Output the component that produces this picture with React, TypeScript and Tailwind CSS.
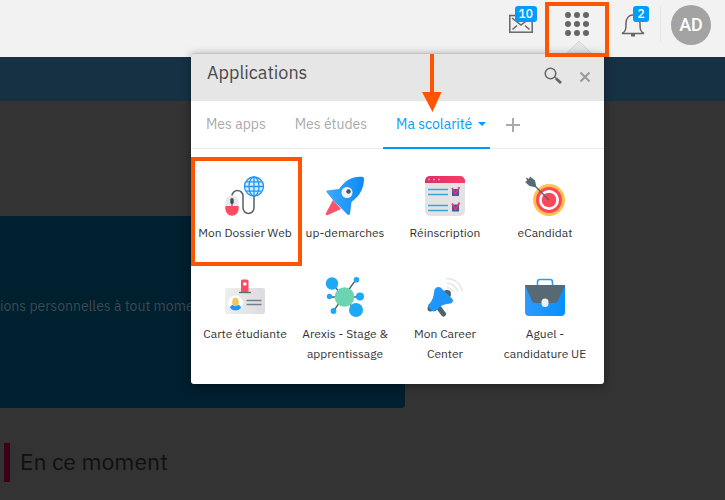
import { useState, type ReactNode } from "react";

type App = {
  name: string;
  icon: ReactNode;
  highlighted?: boolean;
};

const tabs = ["Mes apps", "Mes études", "Ma scolarité"];

function MouseIcon() {
  return (
    <svg viewBox="0 0 40 40" className="size-10" fill="none">
      <path d="M7 23V20a5.500 5.500 0 0 1 11 0v12a5.500 5.500 0 0 0 11 0V20" stroke="#53616b" strokeWidth="1.500" />
      <path d="M0.300 30v-4a6.700 6.700 0 0 1 13.400 0v4z" fill="#e9e9ec" />
      <path d="M0.300 30h13.400v2.800a6.700 7 0 0 1-13.400 0z" fill="#ff4b5e" />
      <rect x="5.300" y="22" width="3.400" height="6" rx="1.700" fill="#3f4e59" />
      <path d="M7 27v3" stroke="#3f4e59" />
      <g stroke="#2196f3" strokeWidth="1.300">
        <circle cx="29" cy="10.500" r="9.500" fill="#d9edff" />
        <ellipse cx="29" cy="10.500" rx="5" ry="9.500" />
        <path d="M29 1v19M19.500 10.500h19M21 5.800h16M21 15.200h16" />
      </g>
    </svg>
  );
}

function RocketIcon() {
  return (
    <svg viewBox="0 0 40 40" className="size-10">
      <defs>
        <linearGradient id="rocket">
          <stop stopColor="#3fa9ff" />
          <stop offset="1" stopColor="#0c8af5" />
        </linearGradient>
      </defs>
      <path d="M8 24 1 37q-1 3 2 2l13-6z" fill="#f9546b" />
      <path d="M8 24 1.500 16q-.500-1 .500-1.500L14 13C20 4 28 0 37 .800q2 0 2 2C39 12 35 20 26.500 26L25 38q-1 1.500-2.500.500l-6-6z" fill="url(#rocket)" />
      <circle cx="22" cy="16.500" r="5.500" fill="#f1f2f6" />
      <circle cx="23.500" cy="15.500" r="2.200" fill="#46535d" />
    </svg>
  );
}

function ChecklistIcon() {
  return (
    <svg viewBox="0 0 40 40" className="size-10" fill="none">
      <defs>
        <linearGradient id="checklist">
          <stop stopColor="#d9306d" />
          <stop offset="1" stopColor="#fa3b62" />
        </linearGradient>
      </defs>
      <rect width="40" height="40" rx="5" fill="#e3e3e4" />
      <path d="M0 7V5a5 5 0 0 1 5-5h30a5 5 0 0 1 5 5v2z" fill="url(#checklist)" />
      <path d="M3 3.500h2m3 0h2m3 0h2" stroke="#f293ad" strokeWidth="1.500" />
      <path d="M3 13.500h20M3 18.500h20M3 29.500h20M3 34.500h20" stroke="#38a6de" strokeWidth="1.500" />
      <path d="M27 13h7v7h-7zM27 28.500h7v7h-7z" fill="#405a9f" />
      <path d="m27 12 3.500 6L34.500 11M27 27.500l3.500 6 4-7" stroke="#ef3169" strokeWidth="1.600" />
    </svg>
  );
}

function TargetIcon() {
  return (
    <svg viewBox="0 0 40 40" className="size-10">
      <circle cx="24" cy="24" r="16" fill="#ffc34d" />
      <circle cx="24" cy="24" r="13" fill="#ff4757" />
      <circle cx="24" cy="24" r="10" fill="#fff" />
      <circle cx="24" cy="24" r="7.300" fill="#ff4757" />
      <path d="m8 8 16 16" stroke="#53636e" strokeWidth="1.300" />
      <path d="M1 1.500 4 3l1-2.500 5 4 1.500 7-7-1.500L0 6l2-1z" fill="#566975" />
    </svg>
  );
}

function CardIcon() {
  return (
    <svg viewBox="0 0 40 40" className="size-10">
      <defs>
        <linearGradient id="card">
          <stop stopColor="#eeeeef" />
          <stop offset="1" stopColor="#dcdcde" />
        </linearGradient>
      </defs>
      <rect y="11" width="40" height="26" rx="2.500" fill="url(#card)" />
      <path d="M14 15.500h12" stroke="#566975" strokeWidth="1.300" />
      <path d="M16 15V4q0-1.500 1.500-1.500h4.500q1.500 0 1.500 1.500v11z" fill="#f94b61" />
      <circle cx="19.800" cy="7" r="1.800" fill="#fff" />
      <circle cx="10.500" cy="26" r="7.500" fill="#fff" />
      <path d="M5 31q0-3.500 5.500-3.500T16 31q-2.500 2.500-5.500 2.500T5 31" fill="#1997ff" />
      <ellipse cx="10.500" cy="25" rx="3.300" ry="4.300" fill="#f5c35d" />
      <path d="M21.500 23.500h15M21.500 27.500h15" stroke="#6f818b" strokeWidth="1.500" />
    </svg>
  );
}

function NetworkIcon() {
  return (
    <svg viewBox="0 0 40 40" className="size-10">
      <path d="M7 6.500 31 34M8.500 34 31 2.500M3 20h32" stroke="#4f606c" strokeWidth="1.300" />
      <circle cx="19.500" cy="20" r="9.800" fill="#6bd4b1" />
      <g fill="#1da9f5">
        <circle cx="7" cy="6.500" r="6.200" />
        <circle cx="31" cy="33" r="7" />
        <circle cx="31.500" cy="2.800" r="2.800" />
        <circle cx="35" cy="19.500" r="4" />
        <circle cx="4.500" cy="19.500" r="2.700" />
        <circle cx="8.500" cy="34" r="2.900" />
      </g>
    </svg>
  );
}

function MegaphoneIcon() {
  return (
    <svg viewBox="0 0 40 40" className="size-10" fill="none">
      <path d="m14 31 4.500 6" stroke="#4f6270" strokeWidth="5" strokeLinecap="round" />
      <circle cx="22" cy="17" r="4" fill="#4f6270" />
      <circle cx="5.500" cy="31.500" r="3" fill="#4f6270" />
      <path d="M3 28C8 24 8.500 19 9.500 12.500Q12 9 15.500 10.500L27.500 22Q29 25.500 25.500 26.500C20 27 16 28 12.500 32.500Q9.500 36 6.500 33.500T3 28z" fill="#1e96fb" />
      <path d="M22 6q8 1 11 8.500M21 1.500q13 0 16.500 13M22 10.500q4.500 1 6 4.500" stroke="#e4e6e8" strokeWidth="1.600" />
    </svg>
  );
}

function BriefcaseIcon() {
  return (
    <svg viewBox="0 0 40 40" className="size-10" fill="none">
      <defs>
        <linearGradient id="briefcase">
          <stop stopColor="#2f9bfc" />
          <stop offset="1" stopColor="#0590ff" />
        </linearGradient>
      </defs>
      <path d="M12.500 8.500V5q0-2.500 2.500-2.500h10q2.500 0 2.500 2.500v3.500" stroke="#2c9df9" strokeWidth="1.600" />
      <path d="M0 8h40v27q0 4-4 4H4q-4 0-4-4z" fill="url(#briefcase)" />
      <path d="M0 8h40l-7 16q-1 2-3.500 2h-19Q8 26 7 24z" fill="#566975" />
      <rect x="16.500" y="21.500" width="7" height="8.500" rx="3.500" fill="#eff1f5" />
    </svg>
  );
}

const apps: App[] = [
  { name: "Mon Dossier Web", icon: <MouseIcon />, highlighted: true },
  { name: "up-demarches", icon: <RocketIcon /> },
  { name: "Réinscription", icon: <ChecklistIcon /> },
  { name: "eCandidat", icon: <TargetIcon /> },
  { name: "Carte étudiante", icon: <CardIcon /> },
  { name: "Arexis - Stage & apprentissage", icon: <NetworkIcon /> },
  { name: "Mon Career Center", icon: <MegaphoneIcon /> },
  { name: "Aguel - candidature UE", icon: <BriefcaseIcon /> },
];

function Badge({ children }: { children: ReactNode }) {
  return (
    <span className="absolute -top-2 -right-1 h-4 min-w-4 rounded-[3px] bg-[#039cfb] px-1 text-center text-xs leading-4 font-medium text-white">
      {children}
    </span>
  );
}

function TopBar() {
  return (
    <header className="flex h-[57px] items-start justify-end bg-[#f2f2f2] pr-3.5">
      <button aria-label="Messages" className="relative mt-3.5 h-5 w-6 text-[#666]">
        <svg viewBox="0 0 24 20" className="h-5 w-6" fill="none" stroke="currentColor" strokeWidth="1.500">
          <rect x=".8" y="1.500" width="22.400" height="16.700" />
          <path d="m3 4 9 7 9-7M3.500 15.500 8 11.500M20.500 15.500 16 11.500" />
        </svg>
        <Badge>10</Badge>
      </button>

      <button aria-label="Applications" className="relative ml-8 h-14 w-6 text-[#666]">
        <svg viewBox="0 0 24 24" className="absolute top-3 left-0 size-6" fill="currentColor">
          {[3, 12, 21].map((y) => [3, 12, 21].map((x) => <circle key={`${x}-${y}`} cx={x} cy={y} r="3" />))}
        </svg>
        <svg viewBox="0 0 24 12" className="absolute top-[41px] left-0.5 h-3 w-6">
          <path d="M0 12 12 0l12 12z" fill="#e6e6e6" stroke="#d4d4d4" />
        </svg>
        <span className="absolute top-0.5 -left-5 z-30 h-[55px] w-16 border-4 border-[#ff5500]" />
      </button>

      <button aria-label="Notifications" className="relative mt-3.5 ml-8 h-6 w-6 text-[#666]">
        <svg viewBox="0 0 24 24" className="size-6" fill="none" stroke="currentColor" strokeWidth="1.500">
          <path d="M1 19.500c4-2 4-5 4-10C5 4 8 1 12 1s7 3 7 8.500c0 5 0 8 4 10z" />
          <path d="M10 21h4" strokeWidth="3" />
        </svg>
        <Badge>2</Badge>
      </button>

      <div className="mt-1.5 ml-[15px] h-9 w-px bg-[#e6e6e6]" />
      <button className="mt-[5px] ml-2.5 size-10 rounded-full bg-[#a3a3a3] font-['Roboto',sans-serif] text-lg font-medium text-white">
        AD
      </button>
    </header>
  );
}

function AppsPanel() {
  const [tab, setTab] = useState("Ma scolarité");

  return (
    <section className="absolute top-[53px] right-[121px] z-20 w-[413px] max-w-full rounded-[3px] bg-white pb-6 shadow-[0_2px_10px_rgba(0,0,0,0.4)]">
      <div className="flex h-12 items-center rounded-t-[3px] border-t border-[#c4c4c4] bg-[#e6e6e6] pr-3 pl-4">
        <h2 className="flex-1 pb-2.5 text-lg leading-6 text-[#4a4a4a]">Applications</h2>
        <button aria-label="Rechercher" className="pb-1 text-[#666]">
          <svg viewBox="0 0 18 18" className="size-[18px]" fill="none" stroke="currentColor">
            <circle cx="6.500" cy="6.500" r="5.300" strokeWidth="1.500" />
            <path d="m10.500 10 2 1.500" strokeWidth="1.500" />
            <path d="m12 11.500 5 4.500" strokeWidth="3" />
          </svg>
        </button>
        <button aria-label="Fermer" className="ml-4 pb-0.5 text-[#999]">
          <svg viewBox="0 0 12 12" className="m-px size-3" stroke="currentColor" strokeWidth="2">
            <path d="m1.500 1.500 9 9m0-9-9 9" />
          </svg>
        </button>
      </div>

      <nav className="flex h-12 border-b border-[#ececec] pl-0.5">
        {tabs.map((t) => (
          <button
            key={t}
            onClick={() => setTab(t)}
            className={`-mb-px flex items-center gap-1.5 border-b-2 pl-[13px] text-sm whitespace-nowrap ${
              t === tab ? "border-[#039cfb] pr-1 text-[#039cfb]" : "mr-[3px] border-transparent pr-[13px] text-[#aaa]"
            }`}
          >
            {t}
            {t === tab && (
              <svg viewBox="0 0 8 4" className="h-1 w-2" fill="currentColor">
                <path d="M0 0h8L4 4z" />
              </svg>
            )}
          </button>
        ))}
        <button aria-label="Ajouter un onglet" className="ml-4 text-[#aaa]">
          <svg viewBox="0 0 14 14" className="size-3.5" stroke="currentColor" strokeWidth="2">
            <path d="M7 0v14M0 7h14" />
          </svg>
        </button>
      </nav>

      <ul className="grid grid-cols-4 gap-y-[18px] pt-[27px] pr-[9px] pl-1">
        {apps.map((app) => (
          <li key={app.name} className="relative">
            <a href="#" className="flex flex-col items-center px-0.5 text-center text-xs leading-5 text-[#333]">
              {app.icon}
              <span className="mt-[7px] -mb-1 min-h-10">{app.name}</span>
            </a>
            {app.highlighted && (
              <span className="pointer-events-none absolute -top-[19px] -left-1 h-[109px] w-[111px] border-4 border-[#ff5500]" />
            )}
          </li>
        ))}
      </ul>

      <svg viewBox="0 0 20 60" className="pointer-events-none absolute top-0 left-[231px] h-[60px] w-5">
        <path d="M8 1h4v38h7.500L10.500 59 0 39h8z" fill="#ff5500" />
      </svg>
    </section>
  );
}

export default function App() {
  return (
    <div className="relative min-h-screen overflow-hidden bg-[#333] font-['IBM_Plex_Sans','Roboto',sans-serif]">
      <TopBar />
      <AppsPanel />

      <div className="h-11 bg-[#163144]" />
      <main>
        <div className="mt-[115px] h-48 w-[405px] rounded-br-[4px] bg-[#001f2f] pt-20">
          <p className="text-sm leading-5 whitespace-nowrap text-[#3c4a51]">ions personnelles à tout moment</p>
        </div>
        <div className="mt-[35px] ml-1 h-[39px] border-l-6 border-[#3b0016] pl-2.5">
          <h1 className="text-[23px] leading-9 text-[#101010]">En ce moment</h1>
        </div>
      </main>
    </div>
  );
}
